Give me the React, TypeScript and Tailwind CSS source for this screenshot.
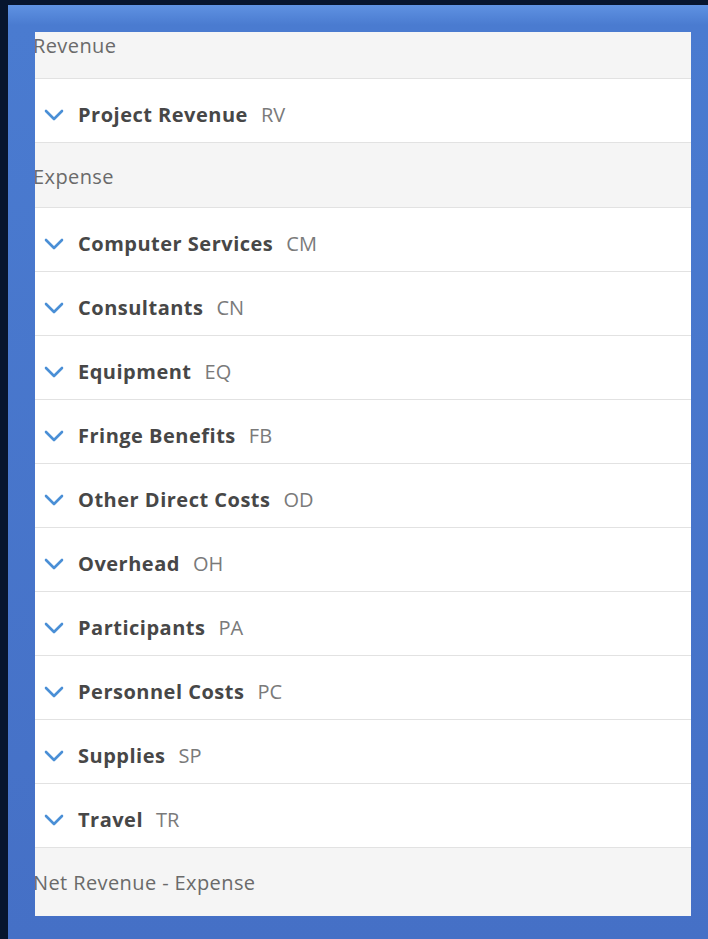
type Row =
  | { kind: "header"; label: string; clipped?: boolean }
  | { kind: "account"; name: string; code: string };

const rows: Row[] = [
  { kind: "header", label: "Revenue", clipped: true },
  { kind: "account", name: "Project Revenue", code: "RV" },
  { kind: "header", label: "Expense" },
  { kind: "account", name: "Computer Services", code: "CM" },
  { kind: "account", name: "Consultants", code: "CN" },
  { kind: "account", name: "Equipment", code: "EQ" },
  { kind: "account", name: "Fringe Benefits", code: "FB" },
  { kind: "account", name: "Other Direct Costs", code: "OD" },
  { kind: "account", name: "Overhead", code: "OH" },
  { kind: "account", name: "Participants", code: "PA" },
  { kind: "account", name: "Personnel Costs", code: "PC" },
  { kind: "account", name: "Supplies", code: "SP" },
  { kind: "account", name: "Travel", code: "TR" },
  { kind: "header", label: "Net Revenue - Expense" },
];

function Chevron() {
  return (
    <svg width="20" height="12" viewBox="0 0 20 12" className="shrink-0">
      <polyline
        points="2,2 10,10 18,2"
        fill="none"
        stroke="#4a8fd6"
        strokeWidth="2.6"
        strokeLinecap="round"
        strokeLinejoin="round"
      />
    </svg>
  );
}

// group header rows; the first one is scrolled partly out of view
function GroupHeader({ label, clipped }: { label: string; clipped?: boolean }) {
  return (
    <li
      className={`flex items-end bg-[#f5f5f5] text-[20px] tracking-[0.4px] text-[#6a6a6a] ${
        clipped
          ? "h-[47px] border-b border-[#e2e2e2] pb-[22px]"
          : "h-[65px] border-b border-[#e2e2e2] pb-[20px] last:h-[68px] last:border-b-0 last:pb-[23px]"
      }`}
    >
      <span className="-ml-[2px] leading-none">{label}</span>
    </li>
  );
}

function AccountRow({ name, code }: { name: string; code: string }) {
  return (
    <li className="flex h-[64px] items-center border-b border-[#e2e2e2] bg-white pl-[9px] pt-[8px]">
      <Chevron />
      <span className="ml-[14px] text-[20px] font-bold tracking-[0.5px] text-[#474747]">{name}</span>
      <span className="ml-[13px] text-[20px] text-[#7a7a7a]">{code}</span>
    </li>
  );
}

export default function App() {
  return (
    <div
      className="h-[939px] w-[708px] overflow-hidden bg-[#07152e] pl-[8px] pt-[5px]"
      style={{ fontFamily: '"Open Sans", "Noto Sans", sans-serif' }}
    >
      <div className="h-full w-full bg-[linear-gradient(to_bottom,#5f92e2_0px,#4a7bd0_20px,#4570c6_100%)] pl-[27px] pr-[17px] pt-[27px]">
        <ul className="h-[884px] overflow-hidden bg-white">
          {rows.map((r, i) =>
            r.kind === "header" ? (
              <GroupHeader key={i} label={r.label} clipped={r.clipped} />
            ) : (
              <AccountRow key={i} name={r.name} code={r.code} />
            )
          )}
        </ul>
      </div>
    </div>
  );
}
